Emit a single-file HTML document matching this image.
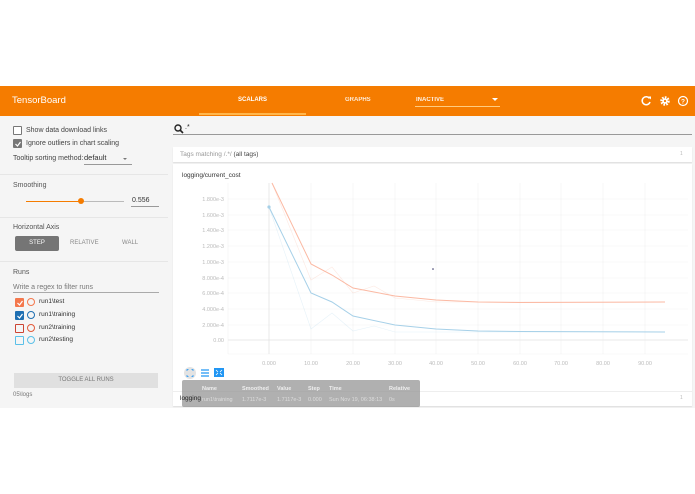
<!DOCTYPE html>
<html><head><meta charset="utf-8"><style>
*{box-sizing:border-box;margin:0;padding:0}
body{width:695px;height:494px;background:#fff;font-family:"Liberation Sans",sans-serif;position:relative;overflow:hidden;color:#333}
.a{position:absolute}
.hdr{left:0;top:86px;width:695px;height:30px;background:#f57c00;color:#fff}
.body{left:0;top:116px;width:695px;height:292px;background:#f5f5f5}
.t{font-size:7px;color:#444;white-space:nowrap}
.cb{width:9px;height:9px;border:1px solid #777;border-radius:1px}
.sep{left:0;width:168px;height:1px;background:#e6e6e6}
.circ{width:8px;height:8px;border-radius:50%;border:1px solid}
</style></head><body>
<div class="a hdr">
 <div class="a" style="left:12px;top:9px;font-size:9.5px">TensorBoard</div>
 <div class="a" style="left:238px;top:11px;font-size:6px;font-weight:bold">SCALARS</div>
 <div class="a" style="left:199px;top:27px;width:107px;height:2px;background:#ffb74d"></div>
 <div class="a" style="left:345px;top:11px;font-size:6px;font-weight:bold;opacity:.85">GRAPHS</div>
 <div class="a" style="left:416px;top:11px;font-size:6px;font-weight:bold;opacity:.9">INACTIVE</div>
 <div class="a" style="left:492px;top:12px;width:0;height:0;border-left:3px solid transparent;border-right:3px solid transparent;border-top:3px solid #fff"></div>
 <div class="a" style="left:415px;top:20px;width:85px;height:1px;background:#ffcc80"></div>
 <svg class="a" style="left:640px;top:8px" width="50" height="14" viewBox="0 0 50 14">
  <path d="M9.5 4.5A4 4 0 1 0 10 8" fill="none" stroke="#fff" stroke-width="1.5"/><path d="M8 2.5l3 0 0 3z" fill="#fff"/>
  <circle cx="25" cy="7" r="3.5" fill="none" stroke="#fff" stroke-width="2.5" stroke-dasharray="1.6 1.1"/><circle cx="25" cy="7" r="2.8" fill="#fff"/><circle cx="25" cy="7" r="1.1" fill="#f57c00"/>
  <circle cx="43" cy="7" r="4.5" fill="none" stroke="#fff" stroke-width="1.2"/><text x="43" y="9.5" font-size="6.5" fill="#fff" text-anchor="middle" font-family="Liberation Sans" font-weight="bold">?</text>
 </svg>
</div>
<div class="a body"></div>
<div class="a cb" style="left:13px;top:126px;background:#fff"></div>
<div class="a t" style="left:26px;top:127px">Show data download links</div>
<div class="a cb" style="left:13px;top:139px;background:#777;border-color:#777"></div>
<svg class="a" style="left:14px;top:140px" width="8" height="8"><path d="M1.5 4l2 2 3-4" stroke="#fff" fill="none" stroke-width="1.2"/></svg>
<div class="a t" style="left:26px;top:140px">Ignore outliers in chart scaling</div>
<div class="a t" style="left:13px;top:155px">Tooltip sorting method:</div>
<div class="a" style="left:84px;top:153px;font-size:7.5px;color:#333">default</div>
<div class="a" style="left:123px;top:158px;border-left:2px solid transparent;border-right:2px solid transparent;border-top:2px solid #777"></div>
<div class="a" style="left:84px;top:164px;width:48px;height:1px;background:#999"></div>
<div class="a sep" style="top:174px"></div>
<div class="a t" style="left:13px;top:182px;color:#555">Smoothing</div>
<div class="a" style="left:26px;top:201px;width:55px;height:1px;background:#f57c00"></div>
<div class="a" style="left:81px;top:201px;width:43px;height:1px;background:#bbb"></div>
<div class="a" style="left:78px;top:198px;width:6px;height:6px;border-radius:50%;background:#f57c00"></div>
<div class="a t" style="left:132px;top:197px;color:#333">0.556</div>
<div class="a" style="left:131px;top:206px;width:28px;height:1px;background:#999"></div>
<div class="a sep" style="top:217px"></div>
<div class="a t" style="left:13px;top:224px;color:#555">Horizontal Axis</div>
<div class="a" style="left:15px;top:236px;width:44px;height:15px;background:#757575;border-radius:2px;color:#fff;font-size:6px;text-align:center;line-height:15px">STEP</div>
<div class="a" style="left:70px;top:240px;font-size:6px;color:#888">RELATIVE</div>
<div class="a" style="left:122px;top:240px;font-size:6px;color:#888">WALL</div>
<div class="a sep" style="top:261px"></div>
<div class="a t" style="left:13px;top:269px;color:#555">Runs</div>
<div class="a t" style="left:13px;top:284px;color:#777">Write a regex to filter runs</div>
<div class="a" style="left:13px;top:292px;width:146px;height:1px;background:#aaa"></div>
<div class="a cb" style="left:15px;top:298px;background:#f4784d;border-color:#f4784d"></div>
<svg class="a" style="left:16px;top:299px" width="8" height="8"><path d="M1.5 4l2 2 3-4" stroke="#fff" fill="none" stroke-width="1.2"/></svg>
<div class="a circ" style="left:27px;top:298px;border-color:#f4784d"></div>
<div class="a" style="left:39px;top:298px;font-size:6.5px;color:#333">run1\test</div>
<div class="a cb" style="left:15px;top:311px;background:#1f6fb2;border-color:#1f6fb2"></div>
<svg class="a" style="left:16px;top:312px" width="8" height="8"><path d="M1.5 4l2 2 3-4" stroke="#fff" fill="none" stroke-width="1.2"/></svg>
<div class="a circ" style="left:27px;top:311px;border-color:#1f6fb2"></div>
<div class="a" style="left:39px;top:311px;font-size:6.5px;color:#333">run1\training</div>
<div class="a cb" style="left:15px;top:324px;border-color:#cc4433"></div>
<div class="a circ" style="left:27px;top:324px;border-color:#e25a3a"></div>
<div class="a" style="left:39px;top:324px;font-size:6.5px;color:#333">run2\training</div>
<div class="a cb" style="left:15px;top:336px;border-color:#5bc0e8"></div>
<div class="a circ" style="left:27px;top:336px;border-color:#5bc0e8"></div>
<div class="a" style="left:39px;top:336px;font-size:6.5px;color:#333">run2\testing</div>
<div class="a" style="left:14px;top:373px;width:144px;height:15px;background:#e0e0e0;font-size:6px;color:#777;text-align:center;line-height:15px">TOGGLE ALL RUNS</div>
<div class="a" style="left:13px;top:392px;font-size:6px;color:#777">05\logs</div>
<svg class="a" style="left:174px;top:124px" width="10" height="10"><circle cx="4" cy="4" r="3" fill="none" stroke="#222" stroke-width="1.4"/><path d="M6 6l3 3" stroke="#222" stroke-width="1.6"/></svg>
<div class="a" style="left:185px;top:124px;font-size:7px;color:#222">.*</div>
<div class="a" style="left:173px;top:134px;width:519px;height:1px;background:#999"></div>
<div class="a" style="left:173px;top:147px;width:519px;height:15px;background:#fff;box-shadow:0 1px 1px #ddd"></div>
<div class="a" style="left:180px;top:151px;font-size:6.5px;color:#999">Tags matching /.*/ <span style="color:#444">(all tags)</span></div>
<div class="a" style="left:680px;top:151px;font-size:5px;color:#bbb">1</div>
<div class="a" style="left:173px;top:164px;width:519px;height:242px;background:#fff;box-shadow:0 1px 1px #ddd"></div>
<div class="a" style="left:182px;top:172px;font-size:6.5px;color:#333">logging/current_cost</div>
<svg class="a" style="left:0;top:0" width="695" height="494">
 <g stroke="#f2f2f2" stroke-width="0.6">
  <line x1="228" y1="199" x2="688" y2="199"/><line x1="228" y1="215" x2="688" y2="215"/><line x1="228" y1="230" x2="688" y2="230"/><line x1="228" y1="246" x2="688" y2="246"/><line x1="228" y1="262" x2="688" y2="262"/><line x1="228" y1="278" x2="688" y2="278"/><line x1="228" y1="293" x2="688" y2="293"/><line x1="228" y1="309" x2="688" y2="309"/><line x1="228" y1="325" x2="688" y2="325"/><line x1="228" y1="354" x2="688" y2="354"/>
  <line x1="311" y1="183" x2="311" y2="354"/><line x1="353" y1="183" x2="353" y2="354"/><line x1="395" y1="183" x2="395" y2="354"/><line x1="436" y1="183" x2="436" y2="354"/><line x1="478" y1="183" x2="478" y2="354"/><line x1="520" y1="183" x2="520" y2="354"/><line x1="561" y1="183" x2="561" y2="354"/><line x1="603" y1="183" x2="603" y2="354"/><line x1="645" y1="183" x2="645" y2="354"/><line x1="228" y1="183" x2="228" y2="354"/>
 </g>
 <line x1="228" y1="340" x2="688" y2="340" stroke="#e3e3e3" stroke-width="0.8"/>
 <line x1="269" y1="183" x2="269" y2="354" stroke="#e3e3e3" stroke-width="0.8"/>
 <g fill="none" stroke-width="0.6" opacity="0.25">
  <polyline stroke="#f8a98e" points="272,183 311,280 332,267 353,293 374,286 395,298 436,302 665,302"/>
  <polyline stroke="#9ccce6" points="269,207 311,329 332,313 353,331 374,326 395,332 436,332 665,332"/>
 </g>
 <polyline fill="none" stroke="#fbb9a3" stroke-width="1" points="272,183 311,264 332,275 353,288 395,296 436,300 478,302 520,302.5 665,302"/>
 <polyline fill="none" stroke="#a6d0e8" stroke-width="1" points="269,207 311,293 332,302 353,316 395,325 436,329 478,331 520,331.5 665,332"/>
 <circle cx="269" cy="207" r="1.6" fill="#a6d0e8"/>
 <circle cx="433" cy="269" r="0.8" fill="#336"/>
 <g font-family="Liberation Sans" font-size="5.5" fill="#bbb" text-anchor="end">
  <text x="224" y="201">1.800e-3</text><text x="224" y="217">1.600e-3</text><text x="224" y="232">1.400e-3</text><text x="224" y="248">1.200e-3</text><text x="224" y="264">1.000e-3</text><text x="224" y="280">8.000e-4</text><text x="224" y="295">6.000e-4</text><text x="224" y="311">4.000e-4</text><text x="224" y="327">2.000e-4</text><text x="224" y="342">0.00</text>
 </g>
 <g font-family="Liberation Sans" font-size="5.5" fill="#bbb" text-anchor="middle">
  <text x="269" y="365">0.000</text><text x="311" y="365">10.00</text><text x="353" y="365">20.00</text><text x="395" y="365">30.00</text><text x="436" y="365">40.00</text><text x="478" y="365">50.00</text><text x="520" y="365">60.00</text><text x="561" y="365">70.00</text><text x="603" y="365">80.00</text><text x="645" y="365">90.00</text>
 </g>
 <circle cx="190" cy="373" r="6" fill="#e3e3e3"/>
 <path d="M187 371v-1.5h1.5M193 371v-1.5h-1.5M187 375v1.5h1.5M193 375v1.5h-1.5" stroke="#2196f3" fill="none" stroke-width="0.8"/>
 <path d="M201 370h8M201 373h8M201 376h8" stroke="#2196f3" stroke-width="1.3"/>
 <rect x="214" y="368" width="10" height="9" fill="#2196f3"/><path d="M216 370l2 2M222 370l-2 2M216 375l2-2M222 375l-2-2" stroke="#fff" stroke-width="0.8"/>
</svg>
<div class="a" style="left:173px;top:391px;width:519px;height:15px;background:#fff;border-top:1px solid #eee"></div>
<div class="a" style="left:680px;top:395px;font-size:5px;color:#bbb">1</div>
<div class="a" style="left:182px;top:380px;width:238px;height:27px;background:rgba(150,150,150,.75);border-radius:2px"></div>
<div class="a" style="left:180px;top:395px;font-size:6.5px;color:#222">logging</div>
<div class="a" style="left:182px;top:386px;font-size:5.5px;color:#eee;font-weight:bold;white-space:nowrap">
 <span class="a" style="left:20px">Name</span><span class="a" style="left:60px">Smoothed</span><span class="a" style="left:95px">Value</span><span class="a" style="left:126px">Step</span><span class="a" style="left:147px">Time</span><span class="a" style="left:207px">Relative</span>
</div>
<div class="a" style="left:182px;top:397px;font-size:5.5px;color:#ddd;white-space:nowrap">
 <span class="a" style="left:20px">run1\training</span><span class="a" style="left:60px">1.7117e-3</span><span class="a" style="left:95px">1.7117e-3</span><span class="a" style="left:126px">0.000</span><span class="a" style="left:147px">Sun Nov 19, 06:38:13</span><span class="a" style="left:207px">0s</span>
</div>
</body></html>
